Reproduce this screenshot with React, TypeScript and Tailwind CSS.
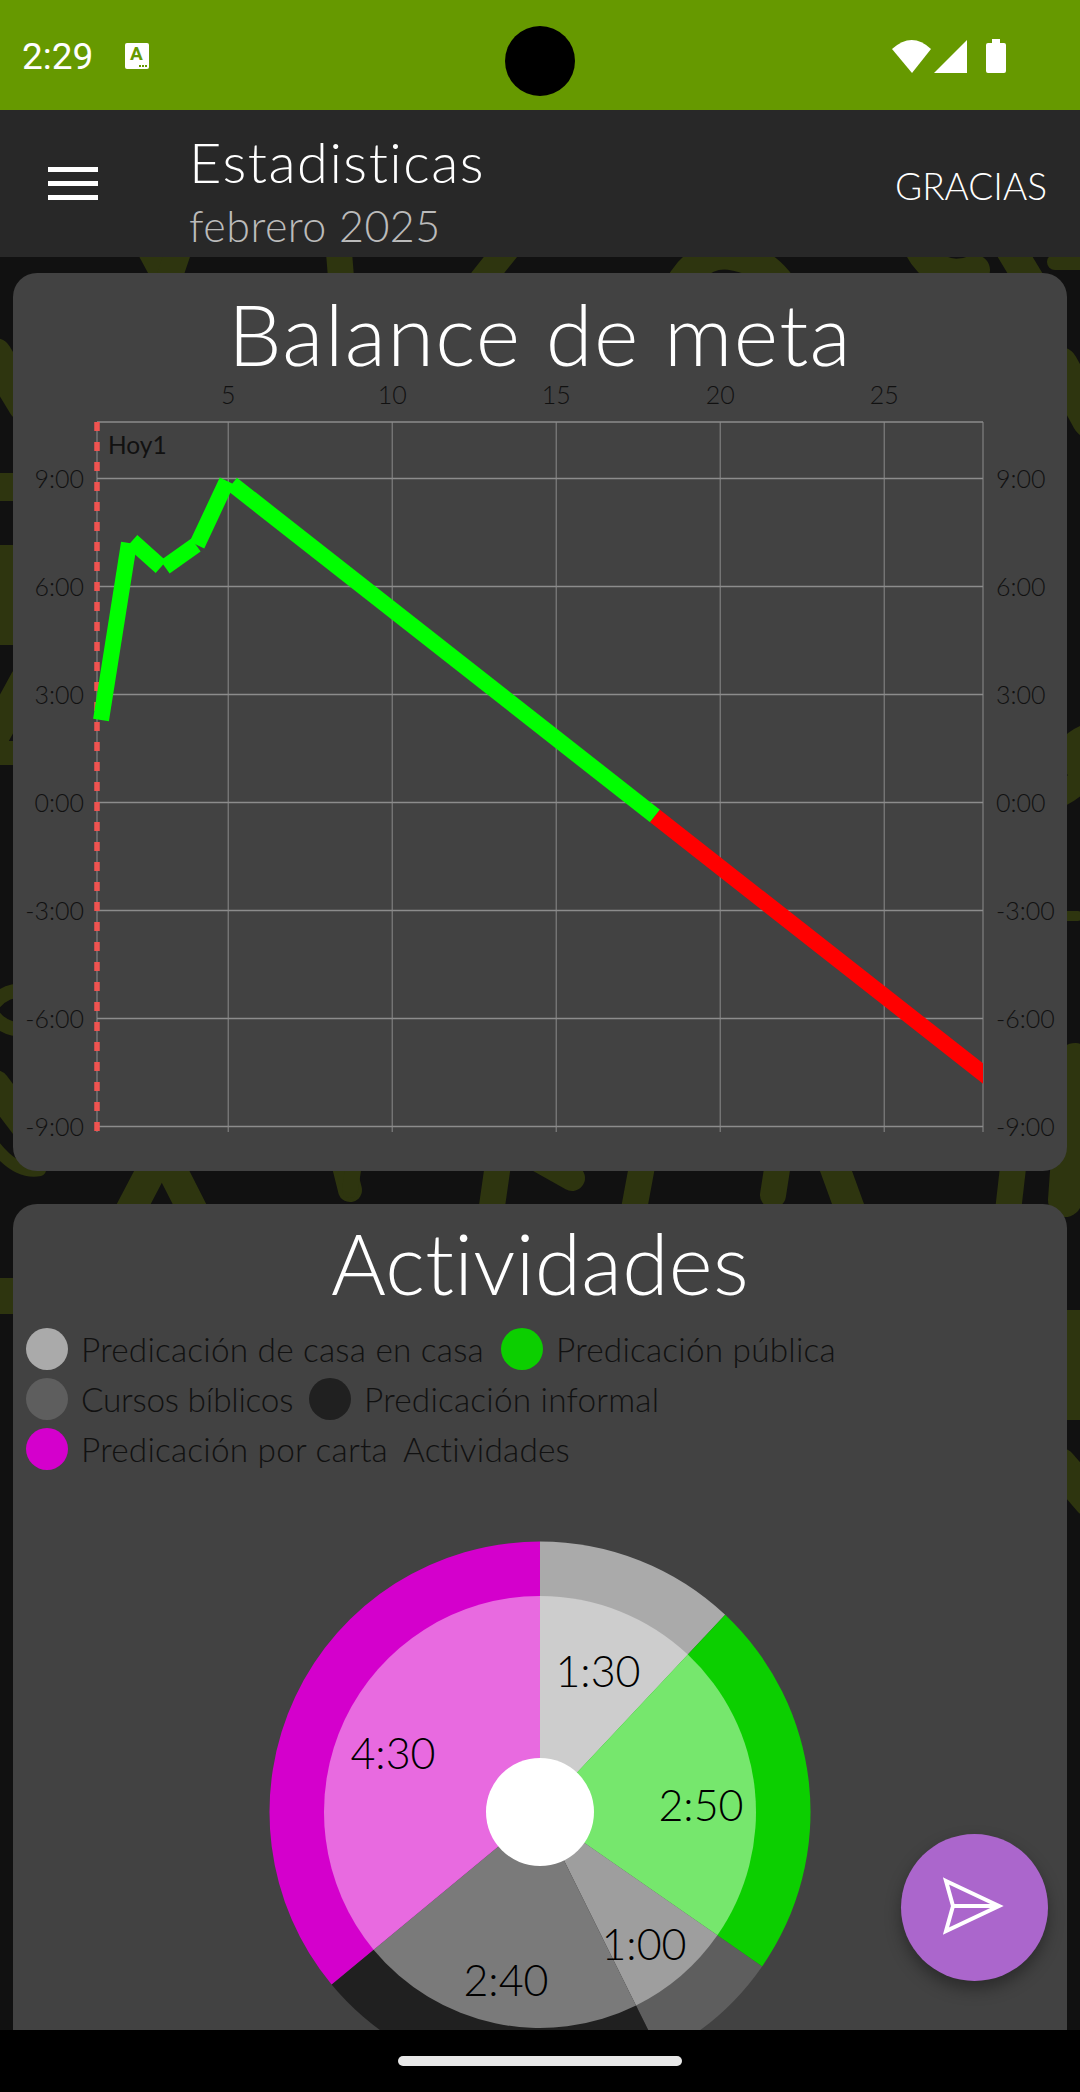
import React from 'react';

const hours = ['9:00', '6:00', '3:00', '0:00', '-3:00', '-6:00', '-9:00'];
const gridY = [478.5, 586.5, 694.5, 802.5, 910.5, 1018.5, 1126.5];
const days = [5, 10, 15, 20, 25];
const dayX = (d: number) => 97 + (d - 1) * 32.8;

const greenSegments = [
  'M101 720 L129 543',
  'M132 541 L161 567',
  'M165 567 L196 545',
  'M197 545 L227 481',
  'M232 484 L655 816',
];

const slices = [
  { from: 0, to: 43.2, outer: '#aaaaaa', inner: '#cdcdcd' },
  { from: 43.2, to: 124.8, outer: '#0ccf00', inner: '#76e76d' },
  { from: 124.8, to: 153.6, outer: '#5e5e5e', inner: '#9e9e9e' },
  { from: 153.6, to: 230.4, outer: '#202020', inner: '#7a7a7a' },
  { from: 230.4, to: 360, outer: '#d400cc', inner: '#e86ae0' },
];

const sliceLabels = [
  { text: '1:30', x: 598, y: 1687 },
  { text: '2:50', x: 701, y: 1821 },
  { text: '1:00', x: 644, y: 1960 },
  { text: '2:40', x: 506, y: 1996 },
  { text: '4:30', x: 393, y: 1769 },
];

const legendRows = [
  [
    { color: '#aaaaaa', label: 'Predicación de casa en casa', width: 'w-[475px]', spacing: 'tracking-[0.2px]' },
    { color: '#0ccf00', label: 'Predicación pública', width: 'w-[340px]', spacing: 'tracking-[0.2px]' },
  ],
  [
    { color: '#5e5e5e', label: 'Cursos bíblicos', width: 'w-[283px]', spacing: 'tracking-[-0.25px]' },
    { color: '#202020', label: 'Predicación informal', width: 'w-[350px]', spacing: 'tracking-[0.2px]' },
  ],
  [
    { color: '#d400cc', label: 'Predicación por carta', width: 'w-[377px]', spacing: 'tracking-[0.2px]' },
    { color: '', label: 'Actividades', width: 'w-[180px]', spacing: 'tracking-[0.2px]' },
  ],
];

const wedge = (from: number, to: number, r: number) => {
  const cx = 540;
  const cy = 1812;
  const a = ((from - 90) * Math.PI) / 180;
  const b = ((to - 90) * Math.PI) / 180;
  const large = to - from > 180 ? 1 : 0;
  return `M${cx} ${cy} L${cx + r * Math.cos(a)} ${cy + r * Math.sin(a)} A${r} ${r} 0 ${large} 1 ${cx + r * Math.cos(b)} ${cy + r * Math.sin(b)} Z`;
};

// the faded handwriting behind the cards, only its edges show
const Wallpaper = () => (
  <svg className="absolute inset-0 w-full h-full" viewBox="0 0 1080 2092" fill="none" stroke="#2e350f" strokeLinecap="round">
    <g strokeWidth="26">
      <path d="M145 240 L172 290" />
      <path d="M182 240 L165 290" />
      <path d="M338 240 L342 290" />
      <path d="M510 245 L482 280" />
      <path d="M672 300 Q695 250 730 255 Q770 260 790 300" strokeWidth="30" />
      <path d="M915 240 Q935 285 975 270" strokeWidth="30" />
      <path d="M1005 240 L1035 290" strokeWidth="30" />
      <path d="M128 1215 L162 1150 L195 1215" strokeWidth="30" />
      <path d="M340 1150 L350 1190" strokeWidth="24" />
      <path d="M356 1150 L350 1190" strokeWidth="16" />
      <path d="M500 1150 L490 1220" />
      <path d="M540 1160 L572 1178" />
      <path d="M645 1150 L632 1220" />
      <path d="M780 1150 L773 1195" />
      <path d="M832 1160 L852 1215" strokeWidth="30" />
      <path d="M1015 1150 L1007 1220" />
      <path d="M-10 1140 Q15 1175 40 1170" strokeWidth="12" />
      <path d="M-5 355 L25 405" strokeWidth="34" />
      <path d="M-5 487 L25 487" strokeWidth="28" />
      <path d="M-5 595 L25 595" strokeWidth="100" />
      <path d="M-5 735 L25 680" strokeWidth="30" />
      <path d="M-5 753 L25 753" strokeWidth="24" />
      <path d="M25 990 Q0 990 -10 1010 Q0 1030 25 1030" strokeWidth="14" />
      <path d="M-5 1085 L25 1125" strokeWidth="30" />
      <path d="M-5 1296 L25 1296" strokeWidth="36" />
      <path d="M1055 262 L1090 262" strokeWidth="16" />
      <path d="M1060 365 L1090 420" strokeWidth="36" />
      <path d="M1090 735 Q1060 745 1075 765 Q1090 780 1060 795" strokeWidth="24" />
      <path d="M1060 916 L1078 916" strokeWidth="10" />
      <path d="M1075 1060 L1065 1200" strokeWidth="34" />
      <path d="M1060 1365 L1090 1365" strokeWidth="110" />
      <path d="M1060 1465 L1090 1500" strokeWidth="34" />
    </g>
  </svg>
);

const StatusBar = () => (
  <div className="relative h-[110px] shrink-0 bg-[#669900] flex items-center pl-[22px] pr-[74px] text-white [font-family:Roboto,sans-serif]">
    <span className="text-[37px] leading-none mb-[-3px]">2:29</span>
    <div className="relative ml-[32px] mb-[-2px] w-[24px] h-[26px] rounded-[2px] bg-white flex justify-center">
      <span className="text-[#669900] text-[19px] font-bold leading-[22px] mr-[2px]">A</span>
      <div className="absolute right-[2px] bottom-[2px] flex gap-[1px]">
        <span className="w-[2px] h-[2px] bg-[#669900]" />
        <span className="w-[2px] h-[2px] bg-[#669900]" />
        <span className="w-[2px] h-[2px] bg-[#669900]" />
      </div>
    </div>
    <div className="absolute left-[505px] top-[26px] w-[70px] h-[70px] rounded-full bg-black" />
    <div className="ml-auto flex items-end mb-[-1px]">
      <svg width="39" height="33" viewBox="892 38 39 33" fill="white">
        <path d="M892 47 Q912 29 931 47 L912 71 Z" />
      </svg>
      <svg className="ml-[3px]" width="33" height="33" viewBox="934 38 33 33" fill="white">
        <path d="M934 71 L967 38 L967 71 Z" />
      </svg>
      <svg className="ml-[19px]" width="20" height="34" viewBox="986 38 20 34" fill="white">
        <path d="M992 38 H1000 V42 H1004 Q1006 42 1006 44 V70 Q1006 72 1004 72 H988 Q986 72 986 70 V44 Q986 42 988 42 H992 Z" />
      </svg>
    </div>
  </div>
);

const AppBar = () => (
  <div className="h-[147px] shrink-0 bg-[#282828] flex items-center text-white relative z-10">
    <div className="ml-[48px] w-[50px] flex flex-col gap-[9px]">
      <div className="h-[5px] bg-white" />
      <div className="h-[5px] bg-white" />
      <div className="h-[5px] bg-white" />
    </div>
    <div className="ml-[91px] flex flex-col mt-[14px]">
      <span className="text-[56px] leading-[64px] font-light tracking-[1.5px]">Estadisticas</span>
      <span className="text-[43px] leading-[52px] mt-[6px] font-light text-[#bbbbbb] tracking-[0.5px]">febrero 2025</span>
    </div>
    <span className="ml-auto mr-[33px] text-[37px] font-light mt-[4px]">GRACIAS</span>
  </div>
);

const BalanceChart = () => (
  <svg className="block w-[1054px] h-[770px]" viewBox="13 380 1054 770">
    <g stroke="#8c8c8c" strokeWidth="1.5">
      <line x1="97" y1="422" x2="983" y2="422" />
      {gridY.map((y) => (
        <line key={y} x1="97" y1={y} x2="983" y2={y} />
      ))}
    </g>
    <g stroke="#8c8c8c" strokeWidth="1">
      <line x1="97" y1="422" x2="97" y2="1132" />
      <line x1="983" y1="422" x2="983" y2="1132" />
      {days.map((d) => (
        <line key={d} x1={dayX(d)} y1="422" x2={dayX(d)} y2="1132" />
      ))}
    </g>
    <line x1="97" y1="422" x2="97" y2="1132" stroke="#ef5350" strokeWidth="5.5" strokeDasharray="9 11" />
    <g fill="#111111" fontSize="25" fontWeight="300">
      {days.map((d) => (
        <text key={d} x={dayX(d)} y="404" textAnchor="middle">
          {d}
        </text>
      ))}
      {hours.map((h, i) => (
        <text key={h} x="84" y={gridY[i] + 9} textAnchor="end">
          {h}
        </text>
      ))}
      {hours.map((h, i) => (
        <text key={h} x="996" y={gridY[i] + 9}>
          {h}
        </text>
      ))}
    </g>
    <text x="108" y="454" fill="#111111" fontSize="24.5">
      Hoy1
    </text>
    <svg x="13" y="380" width="970" height="770" viewBox="13 380 970 770">
      <g fill="none" strokeWidth="16">
        {greenSegments.map((d) => (
          <path key={d} d={d} stroke="#00ff00" />
        ))}
        <path d="M655 816 L990 1079" stroke="#ff0000" />
      </g>
    </svg>
  </svg>
);

const ActivityPie = () => (
  <svg className="block w-[1054px] h-[620px]" viewBox="13 1474 1054 620">
    {slices.map((s) => (
      <path key={s.from} d={wedge(s.from, s.to, 270.5)} fill={s.outer} />
    ))}
    {slices.map((s) => (
      <path key={s.from} d={wedge(s.from, s.to, 216)} fill={s.inner} />
    ))}
    <circle cx="540" cy="1812" r="54" fill="white" />
    {sliceLabels.map((l) => (
      <text key={l.text} x={l.x} y={l.y} textAnchor="middle" fill="#000000" fontSize="43" fontWeight="300">
        {l.text}
      </text>
    ))}
  </svg>
);

export default function App() {
  return (
    <div className="relative w-[1080px] h-[2092px] overflow-hidden bg-[#111111] flex flex-col [font-family:Lato,sans-serif]">
      <Wallpaper />
      <div className="relative z-10">
        <StatusBar />
      </div>
      <AppBar />
      <main className="relative flex-1 min-h-0 overflow-hidden px-[13px] pt-[16px] flex flex-col gap-[33px]">
        <section className="h-[898px] shrink-0 rounded-[24px] bg-[#424242] overflow-hidden">
          <h1 className="h-[107px] pt-[15px] text-center text-[85px] leading-[90px] font-light text-white tracking-[1.3px]">Balance de meta</h1>
          <BalanceChart />
        </section>
        <section className="flex-1 min-h-0 rounded-t-[24px] bg-[#424242] overflow-hidden">
          <h2 className="h-[120px] text-center text-[84px] leading-[118px] font-light text-white tracking-[0.3px]">Actividades</h2>
          <div className="pl-[13px] flex flex-col">
            {legendRows.map((row, i) => (
              <div key={i} className="h-[50px] flex items-center">
                {row.map((item) => (
                  <div key={item.label} className={`flex items-center ${item.width}`}>
                    {item.color && (
                      <span className="w-[42px] h-[42px] rounded-full shrink-0 mr-[13px]" style={{ backgroundColor: item.color }} />
                    )}
                    <span className={`text-[33.4px] leading-[42px] font-light text-[#111111] whitespace-nowrap ${item.spacing}`}>{item.label}</span>
                  </div>
                ))}
              </div>
            ))}
          </div>
          <ActivityPie />
        </section>
      </main>
      <div className="relative z-10 h-[62px] shrink-0 bg-black flex items-center justify-center">
        <div className="w-[284px] h-[10px] rounded-full bg-[#e8e8e8]" />
      </div>
      <button className="absolute z-20 left-[901px] top-[1834px] w-[147px] h-[147px] rounded-full bg-[#ab66cc] shadow-[0_8px_16px_rgba(0,0,0,0.35)] flex items-center justify-center">
        <svg width="147" height="147" viewBox="0 0 147 147" fill="none" stroke="white" strokeWidth="4">
          <path d="M45 47 L98 72 L45 97 L52 72 Z" />
          <path d="M52 72 H98" />
        </svg>
      </button>
    </div>
  );
}
